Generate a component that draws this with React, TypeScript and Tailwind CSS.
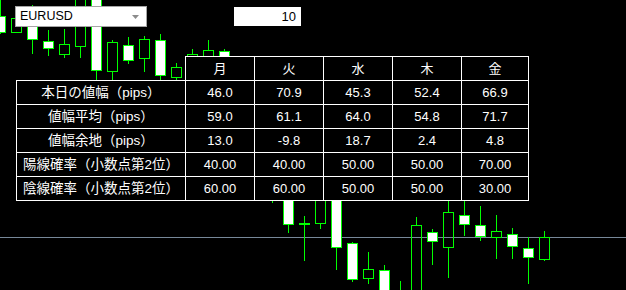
type Candle = [number, number, number, number, number, boolean];

// [center x, high, body top, body bottom, low, bull]
const candles: Candle[] = [
  [0, -5, 16, 32, 33, true],
  [16, 10, 18, 32, 32, false],
  [32, 5, 20, 39, 53, true],
  [48, 30, 41, 48, 55, true],
  [64, 29, 44, 54, 57, false],
  [80, -5, -5, 46, 57, false],
  [96, -5, -5, 70, 80, true],
  [112, 40, 42, 71, 79, false],
  [128, 37, 45, 60, 63, true],
  [144, 36, 39, 58, 71, false],
  [160, 34, 40, 75, 85, true],
  [176, 63, 67, 77, 85, false],
  [192, 49, 54, 70, 75, false],
  [208, 40, 50, 65, 70, false],
  [224, 49, 51, 60, 65, true],
  [272, 140, 150, 190, 202, false],
  [288, 140, 150, 224, 232, true],
  [304, 216, 223, 224, 260, true],
  [320, 160, 170, 223, 228, false],
  [336, 150, 160, 247, 269, true],
  [352, 242, 243, 279, 281, true],
  [368, 252, 269, 278, 283, false],
  [384, 265, 270, 300, 310, true],
  [400, 281, 295, 310, 320, true],
  [416, 217, 225, 300, 310, false],
  [432, 229, 232, 241, 264, true],
  [448, 190, 212, 247, 277, false],
  [464, 190, 215, 224, 235, true],
  [480, 206, 225, 236, 240, true],
  [496, 215, 231, 237, 258, false],
  [512, 228, 234, 246, 258, true],
  [528, 237, 248, 257, 283, true],
  [544, 231, 237, 259, 260, false],
];

const days = ['月', '火', '水', '木', '金'];

const rows: { label: string; values: string[] }[] = [
  { label: '本日の値幅（pips）', values: ['46.0', '70.9', '45.3', '52.4', '66.9'] },
  { label: '値幅平均（pips）', values: ['59.0', '61.1', '64.0', '54.8', '71.7'] },
  { label: '値幅余地（pips）', values: ['13.0', '-9.8', '18.7', '2.4', '4.8'] },
  { label: '陽線確率（小数点第2位）', values: ['40.00', '40.00', '50.00', '50.00', '70.00'] },
  { label: '陰線確率（小数点第2位）', values: ['60.00', '60.00', '50.00', '50.00', '30.00'] },
];

const colW = ['w-[69px]', 'w-[69px]', 'w-[69px]', 'w-[69px]', 'w-[68px]'];

const Chart = () => (
  <svg
    className="absolute inset-0"
    width={626}
    height={290}
    shapeRendering="crispEdges"
  >
    <line x1={0} y1={237.5} x2={626} y2={237.5} stroke="#778899" strokeWidth={1} />
    {candles.map(([c, hi, top, bot, lo, bull]) => (
      <g key={c} stroke="#00ff00" strokeWidth={1}>
        {hi < top && <line x1={c + 0.5} y1={hi} x2={c + 0.5} y2={top} />}
        {lo > bot && <line x1={c + 0.5} y1={bot + 1} x2={c + 0.5} y2={lo + 1} />}
        <rect
          x={c - 4.5}
          y={top + 0.5}
          width={10}
          height={bot - top}
          fill={bull ? '#ffffff' : 'none'}
        />
      </g>
    ))}
  </svg>
);

const Cell = ({ w, last, bottom, children }: { w: string; last?: boolean; bottom?: boolean; children?: React.ReactNode }) => (
  <div
    className={`${w} ${bottom ? 'h-[25px] border-b' : 'h-[24px]'} ${last ? 'border-r' : ''} border-t border-l border-white bg-black flex items-center justify-center`}
  >
    {children}
  </div>
);

export default function App() {
  return (
    <div className="relative w-[626px] h-[290px] bg-black overflow-hidden font-['Liberation_Sans','Noto_Sans_CJK_JP',sans-serif]">
      <Chart />

      <div className="absolute left-[15px] top-[6px] w-[132px] h-[21px] bg-white border border-[#a5a5a5] flex items-center pl-[4px] pr-[7px]">
        <span className="text-[12.5px] text-black flex-1 leading-none">EURUSD</span>
        <svg width={7} height={4} className="text-[#8c8c8c]">
          <polygon points="0,0 7,0 3.5,4" fill="currentColor" />
        </svg>
      </div>

      <div className="absolute left-[234px] top-[7px] w-[67px] h-[19px] bg-white flex items-center justify-end pr-[5px]">
        <span className="text-[13px] text-black leading-none">10</span>
      </div>

      <div className="absolute left-[16px] top-[56px] flex flex-col text-white text-[13px] leading-none">
        <div className="flex pl-[169px]">
          {days.map((d, i) => (
            <Cell key={d} w={colW[i]} last={i === 4}>
              {d}
            </Cell>
          ))}
        </div>
        {rows.map((r, ri) => (
          <div key={r.label} className="flex">
            <Cell w="w-[169px]" bottom={ri === rows.length - 1}>
              <span className="text-[13.5px]">{r.label}</span>
            </Cell>
            {r.values.map((v, i) => (
              <Cell key={i} w={colW[i]} last={i === 4} bottom={ri === rows.length - 1}>
                {v}
              </Cell>
            ))}
          </div>
        ))}
      </div>
    </div>
  );
}
